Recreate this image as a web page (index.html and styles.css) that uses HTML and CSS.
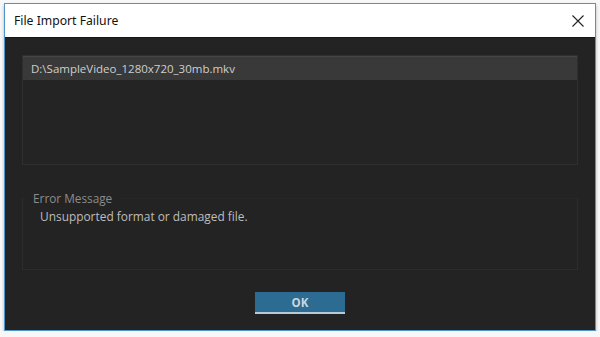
FILE: index.html
```html
<!DOCTYPE html>
<html>
<head>
<meta charset="utf-8">
<link rel="stylesheet" href="styles.css">
</head>
<body>
<div class="window">
  <div class="titlebar">
    <span class="title">File Import Failure</span>
    <svg class="close" width="12" height="12" viewBox="0 0 12 12"><path d="M0.5 0.5 L11.5 11.5 M11.5 0.5 L0.5 11.5" stroke="#222" stroke-width="1.1" fill="none"/></svg>
  </div>
  <div class="content">
    <div class="filelist">
      <div class="row selected">D:\SampleVideo_1280x720_30mb.mkv</div>
    </div>
    <fieldset class="errorbox">
      <legend>Error Message</legend>
      <div class="errortext">Unsupported format or damaged file.</div>
    </fieldset>
    <div class="actions">
      <button class="ok">OK</button>
    </div>
  </div>
</div>
</body>
</html>
```
FILE: styles.css
```css
html, body {
  margin: 0;
  padding: 0;
  background: #f7f7f7;
}
body {
  padding: 3px 4px 0 4px;
  font-family: "Open Sans", "Noto Sans", sans-serif;
}
.window {
  width: 590px;
  border: 1px solid #4f93c9;
  background: #232323;
  box-shadow: 0 2px 3px rgba(0,0,0,0.25);
}
.titlebar {
  height: 33px;
  background: #ffffff;
  display: flex;
  align-items: center;
  justify-content: space-between;
  padding: 0 11px 0 9px;
  border-bottom: 1px solid #161616;
}
.title {
  font-family: "Noto Sans", "Open Sans", sans-serif;
  font-size: 12.2px;
  color: #111;
}
.close {
  display: block;
}
.content {
  padding: 17px 17px 16px 17px;
}
.filelist {
  height: 108px;
  border: 1px solid #2f2f2f;
  background: #242424;
}
.row {
  height: 23px;
  line-height: 23px;
  padding-left: 8px;
  font-size: 11.5px;
  color: #cfcfcf;
}
.selected {
  background: #393939;
  border-top: 1px solid #454545;
}
.errorbox {
  margin: 25px 0 0 0;
  padding: 0;
  height: 78px;
  border: 1px solid #2c2c2c;
  border-top-color: #262626;
  background: #232323;
}
.errorbox legend {
  margin-left: 4px;
  padding: 0 6px;
  font-size: 11.8px;
  color: #8c8c8c;
}
.errortext {
  padding: 2px 0 0 17px;
  font-size: 11.9px;
  color: #bdbdbd;
}
.actions {
  display: flex;
  justify-content: center;
  padding-top: 22px;
}
.ok {
  width: 90px;
  height: 22px;
  border: none;
  border-bottom: 2px solid #b6cbd6;
  background: #2c6c92;
  color: #c9d6de;
  font-family: "Open Sans", "Noto Sans", sans-serif;
  font-size: 11.5px;
  font-weight: bold;
  padding: 0;
}
```
